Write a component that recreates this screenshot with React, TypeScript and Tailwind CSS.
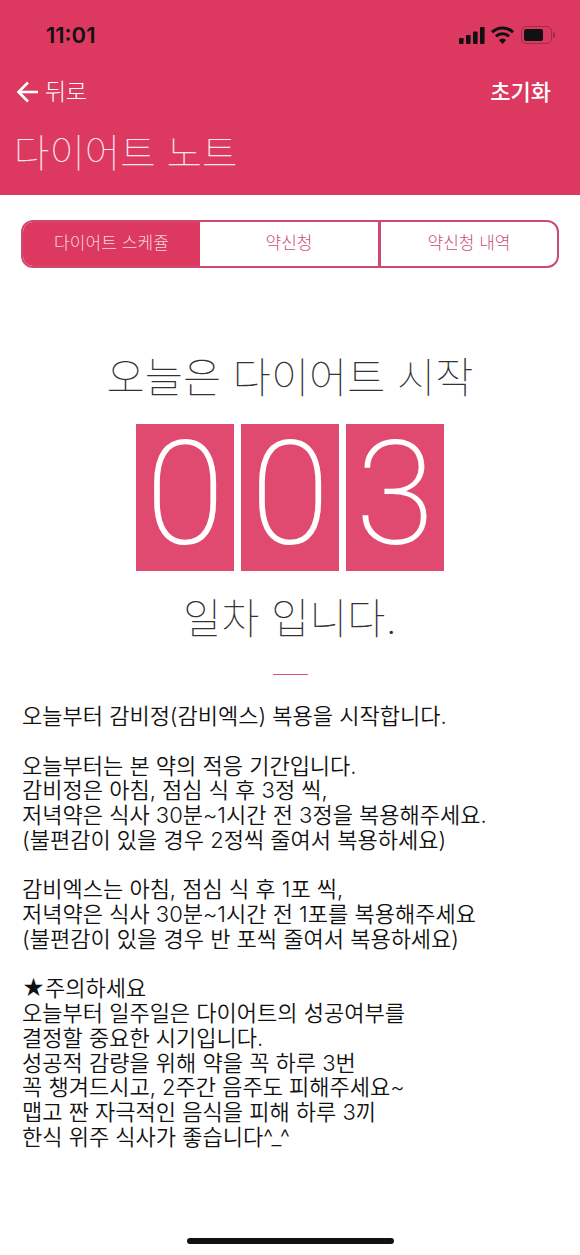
const cjk = "font-['Inter','Noto_Sans_CJK_KR',sans-serif]";

const notes = [
  ["오늘부터 감비정(감비엑스) 복용을 시작합니다."],
  [
    "오늘부터는 본 약의 적응 기간입니다.",
    "감비정은 아침, 점심 식 후 3정 씩,",
    "저녁약은 식사 30분~1시간 전 3정을 복용해주세요.",
    "(불편감이 있을 경우 2정씩 줄여서 복용하세요)",
  ],
  [
    "감비엑스는 아침, 점심 식 후 1포 씩,",
    "저녁약은 식사 30분~1시간 전 1포를 복용해주세요",
    "(불편감이 있을 경우 반 포씩 줄여서 복용하세요)",
  ],
  [
    "★주의하세요",
    "오늘부터 일주일은 다이어트의 성공여부를",
    "결정할 중요한 시기입니다.",
    "성공적 감량을 위해 약을 꼭 하루 3번",
    "꼭 챙겨드시고, 2주간 음주도 피해주세요~",
    "맵고 짠 자극적인 음식을 피해 하루 3끼",
    "한식 위주 식사가 좋습니다^_^",
  ],
];

function StatusIcons() {
  return (
    <div className="flex items-center gap-[6px]">
      <svg width="26" height="17" viewBox="0 0 26 17" fill="#111">
        <rect x="0" y="11" width="4.6" height="6" rx="1" />
        <rect x="7" y="8" width="4.6" height="9" rx="1" />
        <rect x="14" y="4.5" width="4.6" height="12.5" rx="1" />
        <rect x="21" y="0" width="4.6" height="17" rx="1" />
      </svg>
      <svg width="23" height="18" viewBox="0 0 23 18" fill="none" stroke="#111" strokeWidth="3">
        <path d="M1 6.2a15 15 0 0 1 21 0" />
        <path d="M5 10.4a9.4 9.4 0 0 1 13 0" />
        <path d="M11.5 18l-3.6-4a5 5 0 0 1 7.2 0z" fill="#111" stroke="none" />
      </svg>
      <div className="ml-[1px] flex items-center">
        <div className="h-[18px] w-[31px] rounded-[5px] border border-[#9c2c4a] p-[2px]">
          <div className="h-full w-[19px] rounded-[2px] bg-[#111]" />
        </div>
        <div className="ml-[1px] h-[6px] w-[2px] rounded-r-sm bg-[#9c2c4a]" />
      </div>
    </div>
  );
}

function BackArrow() {
  return (
    <svg width="23" height="24" viewBox="0 0 23 24" fill="none" stroke="#fff" strokeWidth="2.6">
      <path d="M22 12H2.5" />
      <path d="M12 2.5l-9.5 9.5 9.5 9.5" />
    </svg>
  );
}

export default function App() {
  return (
    <div className={`flex h-[1255px] w-[580px] flex-col overflow-hidden bg-white ${cjk}`}>
      <header className="h-[195px] bg-[#dc3860] text-white">
        <div className="flex h-[70px] items-center justify-between pl-[46px] pr-[25px]">
          <span className="text-[22px] font-semibold leading-none text-[#111]">11:01</span>
          <StatusIcons />
        </div>
        <div className="flex h-[44px] items-center justify-between pl-[16px] pr-[29px]">
          <div className="flex items-center gap-[6px]">
            <BackArrow />
            <span className="text-[23px] font-light tracking-[-0.5px]">뒤로</span>
          </div>
          <span className="text-[22px] font-medium">초기화</span>
        </div>
        <h1 className="mt-[14px] pl-[14px] text-[38.5px] font-thin leading-[50px] text-[#fbe6eb]">다이어트 노트</h1>
      </header>

      <div className="mx-[21px] mt-[25px] flex h-[48px] overflow-hidden rounded-[12px] border-2 border-[#cf4a70] text-[17px] font-light">
        <div className="flex w-[177px] items-center justify-center bg-[#dc3860] tracking-[0.1px] text-[#f8d7df]">다이어트 스케쥴</div>
        <div className="flex w-[181px] items-center justify-center border-r-[3px] border-[#cf4a70] text-[#c9507a]">약신청</div>
        <div className="flex flex-1 items-center justify-center text-[#c9507a]">약신청 내역</div>
      </div>

      <main className="flex flex-col items-center">
        <p className="mt-[78px] text-[41.5px] font-[150] leading-[64px] text-[#333]">오늘은 다이어트 시작</p>
        <div className="mt-[14px] flex gap-[7px]">
          {["0", "0", "3"].map((digit, i) => (
            <div
              key={i}
              className="flex h-[147px] w-[98px] items-center justify-center bg-[#e14a70] pb-[5px] font-['Roboto',sans-serif] text-[144px] font-extralight leading-none text-white"
            >
              {digit}
            </div>
          ))}
        </div>
        <p className="mt-[16px] text-[41.5px] font-[150] leading-[64px] text-[#333]">일차 입니다.</p>
        <div className="mt-[23px] h-px w-[35px] bg-[#d9557a]" />
      </main>

      <section className="mt-[29px] flex flex-col gap-[24.75px] pl-[22px] text-[22px] font-[350] leading-[24.75px] text-[#111]">
        {notes.map((lines, i) => (
          <p key={i}>
            {lines.map((line, j) => (
              <span key={j} className="block whitespace-nowrap">
                {line}
              </span>
            ))}
          </p>
        ))}
      </section>

      <div className="mt-auto mb-[11px] h-[6px] w-[207px] self-center rounded-full bg-[#111]" />
    </div>
  );
}
